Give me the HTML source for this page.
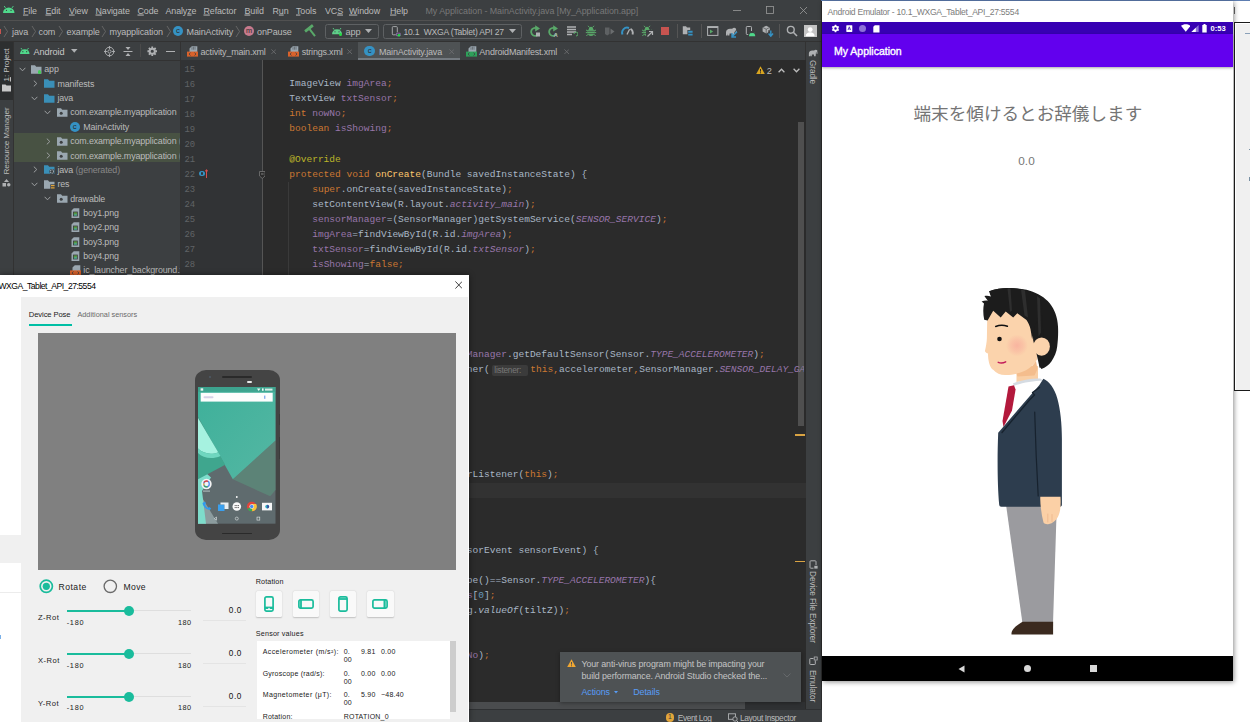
<!DOCTYPE html><html lang="ja"><head><meta charset="utf-8"><title>screenshot</title><style>
*{margin:0;padding:0;box-sizing:border-box}
html,body{width:1250px;height:722px;overflow:hidden;background:#fff}
body{position:relative;font-family:"Liberation Sans",sans-serif;font-size:8.7px;color:#bbb}
.a{position:absolute}
.t{position:absolute;white-space:pre;line-height:1;transform:translateY(-50%)}
.ui{font-family:"Liberation Sans",sans-serif;font-size:8.7px;color:#bbbbbb;letter-spacing:-0.12px}
.code{font-family:"Liberation Mono",monospace;font-size:9.558px;color:#a9b7c6}
.ln{font-family:"Liberation Mono",monospace;font-size:8.9px;color:#606366}
.k{color:#cc7832}.f{color:#9876aa}.an{color:#bbb529}.m{color:#ffc66d}.n{color:#6897bb}.i{font-style:italic}
.si{color:#9876aa;font-style:italic}
.dlg{font-family:"Liberation Sans",sans-serif;font-size:7.4px;color:#222;letter-spacing:0.15px}
u{text-decoration:underline;text-underline-offset:1px}
</style></head><body>
<div class="a" style="left:0px;top:0px;width:821.6px;height:722px;background:#3c3f41;"></div>
<div class="a" style="left:0px;top:20px;width:821.6px;height:1px;background:#515151;"></div>
<div class="a" style="left:0px;top:41px;width:821.6px;height:1px;background:#323232;"></div>
<div class="a" style="left:181px;top:60px;width:625px;height:650px;background:#2b2b2b;"></div>
<div class="a" style="left:181px;top:60px;width:82px;height:650px;background:#313335;"></div>
<div class="a" style="left:262px;top:60px;width:1px;height:650px;background:#555555;"></div>
<div class="a" style="left:0px;top:42px;width:13px;height:668px;background:#3c3f41;"></div>
<div class="a" style="left:13px;top:42px;width:1px;height:668px;background:#323232;"></div>
<div class="a" style="left:14px;top:42px;width:167px;height:668px;background:#3c3f41;"></div>
<div class="a" style="left:180px;top:42px;width:1px;height:668px;background:#323232;"></div>
<div class="a" style="left:14px;top:60px;width:167px;height:1px;background:#323232;"></div>
<div class="a" style="left:181px;top:42px;width:625px;height:18px;background:#3c3f41;"></div>
<div class="a" style="left:181px;top:60px;width:625px;height:1px;background:#323232;"></div>
<div class="a" style="left:805px;top:42px;width:1px;height:668px;background:#323232;"></div>
<div class="a" style="left:806px;top:42px;width:15.6px;height:668px;background:#3c3f41;"></div>
<div class="a" style="left:0px;top:709px;width:821.6px;height:13px;background:#3c3f41;"></div>
<div class="a" style="left:0px;top:709px;width:821.6px;height:1px;background:#323232;"></div>
<div class="a" style="left:820.6px;top:0px;width:1px;height:722px;background:#2b2b2b;"></div>
<div class="t ui" style="left:23px;top:11.4px;font-size:8.9px;color:#bbbbbb;letter-spacing:-0.1px"><u>F</u>ile</div>
<div class="t ui" style="left:45.5px;top:11.4px;font-size:8.9px;color:#bbbbbb;letter-spacing:-0.1px"><u>E</u>dit</div>
<div class="t ui" style="left:69px;top:11.4px;font-size:8.9px;color:#bbbbbb;letter-spacing:-0.1px"><u>V</u>iew</div>
<div class="t ui" style="left:95.5px;top:11.4px;font-size:8.9px;color:#bbbbbb;letter-spacing:-0.1px"><u>N</u>avigate</div>
<div class="t ui" style="left:137.5px;top:11.4px;font-size:8.9px;color:#bbbbbb;letter-spacing:-0.1px"><u>C</u>ode</div>
<div class="t ui" style="left:165.5px;top:11.4px;font-size:8.9px;color:#bbbbbb;letter-spacing:-0.1px">Analy<u>z</u>e</div>
<div class="t ui" style="left:203.5px;top:11.4px;font-size:8.9px;color:#bbbbbb;letter-spacing:-0.1px"><u>R</u>efactor</div>
<div class="t ui" style="left:244.5px;top:11.4px;font-size:8.9px;color:#bbbbbb;letter-spacing:-0.1px"><u>B</u>uild</div>
<div class="t ui" style="left:272.5px;top:11.4px;font-size:8.9px;color:#bbbbbb;letter-spacing:-0.1px">R<u>u</u>n</div>
<div class="t ui" style="left:296px;top:11.4px;font-size:8.9px;color:#bbbbbb;letter-spacing:-0.1px"><u>T</u>ools</div>
<div class="t ui" style="left:325px;top:11.4px;font-size:8.9px;color:#bbbbbb;letter-spacing:-0.1px">VC<u>S</u></div>
<div class="t ui" style="left:349px;top:11.4px;font-size:8.9px;color:#bbbbbb;letter-spacing:-0.1px"><u>W</u>indow</div>
<div class="t ui" style="left:390px;top:11.4px;font-size:8.9px;color:#bbbbbb;letter-spacing:-0.1px"><u>H</u>elp</div>
<div class="t ui" style="left:425.5px;top:10.6px;font-size:8.9px;color:#787878;letter-spacing:-0.05px">My Application - MainActivity.java [My_Application.app]</div>
<svg class="a" style="left:720px;top:0" width="100" height="21" viewBox="0 0 100 21"><g stroke="#9a9a9a" stroke-width="0.8" fill="none"><path d="M13 10.5h8"/><rect x="46.5" y="6.5" width="7" height="7"/><path d="M80 7l7 7M87 7l-7 7"/></g></svg>
<div class="t ui" style="left:12px;top:31.5px;font-size:9px">java</div>
<div class="t ui" style="left:38.5px;top:31.5px;font-size:9px">com</div>
<div class="t ui" style="left:66.5px;top:31.5px;font-size:9px">example</div>
<div class="t ui" style="left:109.5px;top:31.5px;font-size:9px">myapplication</div>
<svg class="a" style="left:3px;top:25px" width="6" height="13" viewBox="0 0 6 13"><path d="M1 1l3.5 5.5L1 12" stroke="#6e6e6e" stroke-width="0.8" fill="none"/></svg>
<svg class="a" style="left:30.5px;top:25px" width="6" height="13" viewBox="0 0 6 13"><path d="M1 1l3.5 5.5L1 12" stroke="#6e6e6e" stroke-width="0.8" fill="none"/></svg>
<svg class="a" style="left:58px;top:25px" width="6" height="13" viewBox="0 0 6 13"><path d="M1 1l3.5 5.5L1 12" stroke="#6e6e6e" stroke-width="0.8" fill="none"/></svg>
<svg class="a" style="left:101px;top:25px" width="6" height="13" viewBox="0 0 6 13"><path d="M1 1l3.5 5.5L1 12" stroke="#6e6e6e" stroke-width="0.8" fill="none"/></svg>
<svg class="a" style="left:166px;top:25px" width="6" height="13" viewBox="0 0 6 13"><path d="M1 1l3.5 5.5L1 12" stroke="#6e6e6e" stroke-width="0.8" fill="none"/></svg>
<svg class="a" style="left:235px;top:25px" width="6" height="13" viewBox="0 0 6 13"><path d="M1 1l3.5 5.5L1 12" stroke="#6e6e6e" stroke-width="0.8" fill="none"/></svg>
<div class="a" style="left:173px;top:26px;width:10px;height:10px;border-radius:50%;background:#3592c4;color:#2b2b2b;font:7.8px 'Liberation Sans',sans-serif;text-align:center;line-height:10px">c</div>
<div class="t ui" style="left:186.5px;top:31.5px;font-size:9px">MainActivity</div>
<div class="a" style="left:244px;top:26px;width:10px;height:10px;border-radius:50%;background:#c77a8d;color:#2b2b2b;font:7.3px 'Liberation Sans',sans-serif;text-align:center;line-height:10px">m</div>
<div class="t ui" style="left:257px;top:31.5px;font-size:9px">onPause</div>
<div class="a" style="left:0px;top:29px;width:1px;height:5px;background:#c75450;"></div>
<svg class="a" style="left:3px;top:5.5px" width="11.5" height="8.1" viewBox="0 0 11.5 8.1"><path d="M0 7.13a5.75 5.75 0 0 1 11.5 0z" fill="#4fd88b"/><path d="M2.53 1.9964000000000002L1.1500000000000001 0M8.97 1.9964000000000002L10.35 0" stroke="#4fd88b" stroke-width="0.9"/><circle cx="3.4499999999999997" cy="4.4206" r="0.6" fill="#3c3f41"/><circle cx="8.049999999999999" cy="4.4206" r="0.6" fill="#3c3f41"/></svg>
<svg class="a" style="left:304px;top:24px" width="14" height="14" viewBox="0 0 14 14"><g transform="rotate(-38 7 7)"><rect x="2" y="2.2" width="10" height="3" rx="0.6" fill="#59a869"/><rect x="6" y="4" width="2" height="9.5" fill="#59a869"/></g></svg>
<div class="a" style="left:324.5px;top:23.5px;width:54px;height:15.5px;background:transparent;border:1px solid #5e6163;border-radius:2.5px"></div>
<svg class="a" style="left:332px;top:27.5px" width="10" height="7.2" viewBox="0 0 10 7.2"><path d="M0 6.2a5.0 5.0 0 0 1 10 0z" fill="#5fd08a"/><path d="M2.2 1.7360000000000002L1.0 0M7.800000000000001 1.7360000000000002L9.0 0" stroke="#5fd08a" stroke-width="0.9"/><circle cx="3.0" cy="3.844" r="0.6" fill="#3c3f41"/><circle cx="7.0" cy="3.844" r="0.6" fill="#3c3f41"/></svg>
<div class="a" style="left:338.5px;top:33px;width:3px;height:3px;background:#22dd44;border-radius:50%"></div>
<div class="t ui" style="left:345.5px;top:32.5px;font-size:9.2px">app</div>
<svg class="a" style="left:365px;top:29px" width="7" height="4" viewBox="0 0 7 4"><path d="M0 0h7L3.5 4z" fill="#afb1b3"/></svg>
<div class="a" style="left:382.5px;top:23.5px;width:139.5px;height:15.5px;background:transparent;border:1px solid #5e6163;border-radius:2.5px"></div>
<svg class="a" style="left:391px;top:25px" width="10" height="12" viewBox="0 0 10 12"><rect x="1.300" y="1.600" width="5" height="8.200" rx="0.9" fill="none" stroke="#afb1b3" stroke-width="0.9"/><rect x="4.800" y="7.300" width="5" height="4.500" fill="#3c3f41"/><path d="M5.600 8.200h3.600v2.600h-3.600z" fill="none" stroke="#a77bd1" stroke-width="0.700"/><circle cx="7.900" cy="10.300" r="1.300" fill="#22dd44"/></svg>
<div class="t ui" style="left:403.5px;top:31.5px;font-size:8.6px;letter-spacing:-0.22px">10.1  WXGA (Tablet) API 27</div>
<svg class="a" style="left:509px;top:29px" width="7" height="4" viewBox="0 0 7 4"><path d="M0 0h7L3.5 4z" fill="#afb1b3"/></svg>
<svg class="a" style="left:529px;top:25px" width="12" height="12" viewBox="0 0 12 12"><path d="M9.2 4.2A4 4 0 1 0 9.8 8.5" fill="none" stroke="#59a869" stroke-width="1.8"/><path d="M6.2 0.300L11 3.500 6.200 6.400z" fill="#59a869"/><rect x="7" y="7.5" width="4" height="4" fill="#afb1b3"/></svg>
<svg class="a" style="left:547px;top:25px" width="12" height="12" viewBox="0 0 12 12"><path d="M9.2 4.2A4 4 0 1 0 9.8 8.5" fill="none" stroke="#59a869" stroke-width="1.8"/><path d="M6.2 0.300L11 3.500 6.200 6.400z" fill="#59a869"/><text x="6.6" y="12" font-family="Liberation Sans" font-size="6" font-weight="bold" fill="#afb1b3">A</text></svg>
<svg class="a" style="left:566px;top:25px" width="12" height="12" viewBox="0 0 12 12"><path d="M1 2h9M1 4.5h9M1 7h9M1 9.5h5" stroke="#afb1b3" stroke-width="1.3"/><path d="M8 9a2 2 0 1 1 2 2" fill="none" stroke="#59a869" stroke-width="1"/></svg>
<svg class="a" style="left:584.5px;top:25px" width="12" height="12" viewBox="0 0 12 12"><ellipse cx="6" cy="7.3" rx="3.4" ry="3.7" fill="#59a869"/><path d="M3.8 3.9a2.2 2.2 0 0 1 4.4 0z" fill="#59a869"/><path d="M4.2 2.2L3 0.8M7.8 2.2L9 0.8M1 5l2 1M11 5L9 6M0.8 7.6h2M11.2 7.6h-2M1.3 10.6l2-1.2M10.700 10.600l-2-1.200" stroke="#59a869" stroke-width="1"/><path d="M3 6.300h6M3 8.600h6" stroke="#3c3f41" stroke-width="0.700"/></svg>
<svg class="a" style="left:603px;top:25px" width="12" height="12" viewBox="0 0 12 12"><path d="M2 2.5h4.5v6.5L4.2 10.5 2 9z" fill="#5e6163"/><path d="M7.5 3.5L11.5 6.5 7.5 9.5z" fill="#6a6d6f"/></svg>
<svg class="a" style="left:621px;top:25px" width="13" height="12" viewBox="0 0 13 12"><path d="M1.5 9.5A5 5 0 0 1 8 3" fill="none" stroke="#3592c4" stroke-width="2"/><path d="M9.5 3.8A5 5 0 0 1 11.5 9.5" fill="none" stroke="#afb1b3" stroke-width="1.9"/><path d="M6 9.5L8.6 4.2" stroke="#afb1b3" stroke-width="1.3"/></svg>
<svg class="a" style="left:640.5px;top:25px" width="12" height="12" viewBox="0 0 12 12"><ellipse cx="6" cy="7.3" rx="3.4" ry="3.7" fill="#59a869"/><path d="M3.8 3.9a2.2 2.2 0 0 1 4.4 0z" fill="#59a869"/><path d="M4.2 2.2L3 0.8M7.8 2.2L9 0.8M1 5l2 1M11 5L9 6M0.8 7.6h2M11.2 7.6h-2M1.3 10.6l2-1.2M10.700 10.600l-2-1.200" stroke="#59a869" stroke-width="1"/><path d="M3 6.300h6M3 8.600h6" stroke="#3c3f41" stroke-width="0.700"/></svg>
<svg class="a" style="left:646px;top:30px" width="8" height="8" viewBox="0 0 8 8"><rect x="0" y="0" width="8" height="8" fill="#3c3f41"/><path d="M1.5 6.5L6 2M3 1.5h3.5V5" fill="none" stroke="#afb1b3" stroke-width="1.2"/></svg>
<div class="a" style="left:661px;top:27px;width:7.5px;height:7.5px;background:#c75450;"></div>
<div class="a" style="left:676.5px;top:24px;width:1px;height:14px;background:#555555;"></div>
<svg class="a" style="left:682px;top:25px" width="12" height="12" viewBox="0 0 12 12"><path d="M0.8 1.300h3.200l1 1.300h3.200v6.600H0.800z" fill="#afb1b3"/><rect x="5.400" y="5" width="5.600" height="5.800" fill="#3c3f41"/><path d="M6.200 5.800h4.400v1.900H6.200zM6.200 8.700h4.400v1.900H6.200z" fill="#3592c4"/></svg>
<div class="a" style="left:700.5px;top:24px;width:1px;height:14px;background:#555555;"></div>
<svg class="a" style="left:706.5px;top:25px" width="12" height="12" viewBox="0 0 12 12"><rect x="0.6" y="1.6" width="10.3" height="8.8" fill="none" stroke="#afb1b3" stroke-width="1"/><path d="M0.6 2.3h10.3" stroke="#afb1b3" stroke-width="1.4"/><path d="M3 4.5L6.2 6.5 3 8.5z" fill="#59a869"/></svg>
<svg class="a" style="left:724.5px;top:26.5px" width="12.0" height="9.0" viewBox="0 0 12 9"><path d="M1 8.5V5.2C1 3 2.8 1.8 5 1.8h2.2C8 0.6 10 0.4 10.8 1.6c0.7 1 0.2 2.2-0.8 2.4l0.3 0.9c0.9-0.1 1.2-0.6 1.2-1.2h0.5c0.1 1.2-0.8 2.1-2 2L9.4 4.2 9 8.5H7.2L7 6.4H4.6L4.4 8.5H2.8L2.7 6.4 2.4 8.5z" fill="#afb1b3"/></svg>
<svg class="a" style="left:731px;top:31px" width="7" height="7" viewBox="0 0 7 7"><path d="M6 0.8L1.5 5.3M1 2v4h4" fill="none" stroke="#3592c4" stroke-width="1.4"/></svg>
<svg class="a" style="left:744.5px;top:25px" width="12" height="12" viewBox="0 0 12 12"><rect x="1.300" y="1.500" width="5.200" height="8" rx="0.8" fill="none" stroke="#afb1b3" stroke-width="1"/><rect x="3.200" y="6" width="8" height="6" fill="#3c3f41"/><path d="M4 11.200a3.100 3.100 0 0 1 6.200 0z" fill="#4fd88b"/><path d="M5 7.800l0.800 1M9.200 7.800l-0.800 1" stroke="#4fd88b" stroke-width="0.600"/></svg>
<svg class="a" style="left:762px;top:25px" width="12" height="12" viewBox="0 0 12 12"><path d="M4.200 0.800L7.800 2.400V6.600L4.200 8.400 0.600 6.600V2.400z" fill="#afb1b3"/><path d="M4.200 4.200v4.200M0.600 2.400L4.200 4.200l3.600-1.800" stroke="#3c3f41" stroke-width="0.600" fill="none"/><rect x="6.200" y="5.200" width="5.800" height="6.800" fill="#3c3f41" opacity="0.900"/><path d="M8.800 5.500V10.500M6.600 8.500L8.800 11.200 11 8.500" fill="none" stroke="#3592c4" stroke-width="1.400"/></svg>
<div class="a" style="left:779px;top:24px;width:1px;height:14px;background:#555555;"></div>
<svg class="a" style="left:785.5px;top:25px" width="12" height="12" viewBox="0 0 12 12"><circle cx="4.8" cy="4.8" r="3.4" fill="none" stroke="#afb1b3" stroke-width="1.4"/><path d="M7.3 7.3L11 11" stroke="#afb1b3" stroke-width="1.6"/></svg>
<div class="a" style="left:804px;top:25px;width:12.5px;height:12px;background:#c4c4c4;"></div>
<svg class="a" style="left:804px;top:25px" width="12.5" height="12" viewBox="0 0 12.5 12"><circle cx="6.2" cy="4.6" r="2.4" fill="#fff"/><path d="M1.8 11.2c0-3 2-4 4.4-4s4.4 1 4.4 4z" fill="#fff"/></svg>
<div class="a" style="left:0px;top:42px;width:13px;height:57.5px;background:#2d2f30;"></div>
<div class="a ui" style="left:6.5px;top:64.5px;width:0;height:0"><div style="position:absolute;white-space:pre;transform:translate(-50%,-50%) rotate(-90deg);font-size:8.1px;color:#c4c4c4;line-height:1"><u>1</u>: Project</div></div>
<svg class="a" style="left:2px;top:84px" width="9" height="8" viewBox="0 0 9 8"><path d="M0 0.5h3.5l1 1H9v6H0z" fill="#c8c8c8"/></svg>
<div class="a ui" style="left:6.5px;top:141px;width:0;height:0"><div style="position:absolute;white-space:pre;transform:translate(-50%,-50%) rotate(-90deg);font-size:8.1px;color:#bbbbbb;line-height:1">Resource Manager</div></div>
<svg class="a" style="left:2px;top:179px" width="9" height="8" viewBox="0 0 9 8"><path d="M4.5 0L7 3H2z" fill="#afb1b3"/><rect x="0.5" y="4" width="3.5" height="3.5" fill="#afb1b3"/><rect x="5" y="4" width="3.5" height="3.5" rx="1.7" fill="#afb1b3"/></svg>
<svg class="a" style="left:20px;top:48px" width="9.5" height="6.9" viewBox="0 0 9.5 6.9"><path d="M0 5.89a4.75 4.75 0 0 1 9.5 0z" fill="#4fd88b"/><path d="M2.09 1.6492L0.9500000000000001 0M7.41 1.6492L8.55 0" stroke="#4fd88b" stroke-width="0.9"/><circle cx="2.85" cy="3.6517999999999997" r="0.6" fill="#3c3f41"/><circle cx="6.6499999999999995" cy="3.6517999999999997" r="0.6" fill="#3c3f41"/></svg>
<div class="t ui" style="left:33.6px;top:53.2px;font-size:9.2px;color:#c8c8c8">Android</div>
<svg class="a" style="left:71px;top:49.3px" width="6.5" height="4" viewBox="0 0 6.5 4"><path d="M0 0h6.5L3.25 3.8z" fill="#afb1b3"/></svg>
<svg class="a" style="left:104px;top:45.5px" width="11" height="11" viewBox="0 0 11 11"><circle cx="5.5" cy="5.5" r="4.3" fill="none" stroke="#afb1b3" stroke-width="1"/><circle cx="5.5" cy="5.5" r="1.6" fill="none" stroke="#afb1b3" stroke-width="0.9"/><path d="M5.5 0v3.2M5.5 7.8V11M0 5.5h3.2M7.8 5.5H11" stroke="#afb1b3" stroke-width="0.9"/></svg>
<svg class="a" style="left:123px;top:45.5px" width="10" height="11" viewBox="0 0 10 11"><path d="M0.5 5.5h9" stroke="#afb1b3" stroke-width="1"/><path d="M5 4L2.5 1h5zM5 7l-2.5 3h5z" fill="#afb1b3"/></svg>
<div class="a" style="left:139.5px;top:44px;width:1px;height:13px;background:#4b4b4b;"></div>
<svg class="a" style="left:146.5px;top:46px" width="10.5" height="10.5" viewBox="0 0 10.5 10.5"><g transform="translate(5.25 5.25)"><circle r="2.6" fill="none" stroke="#afb1b3" stroke-width="2"/><g stroke="#afb1b3" stroke-width="1.8"><path d="M0 -3V-4.8M0 3V4.8M-3 0H-4.8M3 0H4.8M2.1 2.1L3.4 3.4M-2.1 2.1L-3.4 3.4M2.1 -2.1L3.4 -3.4M-2.1 -2.1L-3.4 -3.4"/></g></g></svg>
<div class="a" style="left:166px;top:50.5px;width:9px;height:1.2px;background:#afb1b3;"></div>
<div class="a" style="left:14px;top:133.3px;width:166px;height:28.7px;background:#485243;"></div>
<svg class="a" style="left:18.5px;top:66.9px" width="7" height="5" viewBox="0 0 7 5"><path d="M0.6 0.8L3.5 3.8 6.4 0.8" fill="none" stroke="#9da0a2" stroke-width="1"/></svg>
<svg class="a" style="left:31px;top:64.9px" width="11" height="9" viewBox="0 0 11 9"><path d="M0 0.3h4l1.2 1.4H10.5V8.7H0z" fill="#9aa7b0"/></svg>
<div class="a" style="left:38px;top:70.4px;width:3.4px;height:3.4px;background:#40d055;border-radius:50%"></div>
<div class="t ui" style="left:44.3px;top:69.4px;font-size:8.9px;letter-spacing:-0.13px">app</div>
<svg class="a" style="left:32.5px;top:80.25px" width="5" height="7" viewBox="0 0 5 7"><path d="M0.8 0.6L3.8 3.5 0.8 6.4" fill="none" stroke="#9da0a2" stroke-width="1"/></svg>
<svg class="a" style="left:44px;top:79.25px" width="11" height="9" viewBox="0 0 11 9"><path d="M0 0.3h4l1.2 1.4H10.5V8.7H0z" fill="#3a8fb7"/></svg>
<div class="t ui" style="left:57.4px;top:83.75px;font-size:8.9px;letter-spacing:-0.13px">manifests</div>
<svg class="a" style="left:31.0px;top:95.6px" width="7" height="5" viewBox="0 0 7 5"><path d="M0.6 0.8L3.5 3.8 6.4 0.8" fill="none" stroke="#9da0a2" stroke-width="1"/></svg>
<svg class="a" style="left:44px;top:93.6px" width="11" height="9" viewBox="0 0 11 9"><path d="M0 0.3h4l1.2 1.4H10.5V8.7H0z" fill="#3a8fb7"/></svg>
<div class="t ui" style="left:57.4px;top:98.1px;font-size:8.9px;letter-spacing:-0.13px">java</div>
<svg class="a" style="left:44.0px;top:109.95px" width="7" height="5" viewBox="0 0 7 5"><path d="M0.6 0.8L3.5 3.8 6.4 0.8" fill="none" stroke="#9da0a2" stroke-width="1"/></svg>
<svg class="a" style="left:56.8px;top:107.95px" width="11" height="9" viewBox="0 0 11 9"><path d="M0 0.3h4l1.2 1.4H10.5V8.7H0z" fill="#9aa7b0"/><circle cx="4.2" cy="5.3" r="1.5" fill="#3c3f41"/></svg>
<div class="t ui" style="left:70.2px;top:112.45px;font-size:8.9px;letter-spacing:-0.13px">com.example.myapplication</div>
<div class="a" style="left:69.5px;top:121.6px;width:10.4px;height:10.4px;border-radius:50%;background:#3592c4;color:#2b2b2b;font:7.8px 'Liberation Sans',sans-serif;text-align:center;line-height:10.4px">c</div>
<div class="t ui" style="left:83.3px;top:126.8px;font-size:8.9px;letter-spacing:-0.13px">MainActivity</div>
<svg class="a" style="left:45.5px;top:137.65px" width="5" height="7" viewBox="0 0 5 7"><path d="M0.8 0.6L3.8 3.5 0.8 6.4" fill="none" stroke="#9da0a2" stroke-width="1"/></svg>
<svg class="a" style="left:56.8px;top:136.65px" width="11" height="9" viewBox="0 0 11 9"><path d="M0 0.3h4l1.2 1.4H10.5V8.7H0z" fill="#9aa7b0"/><circle cx="4.2" cy="5.3" r="1.5" fill="#3c3f41"/></svg>
<div class="t ui" style="left:70.2px;top:141.15px;font-size:8.9px;letter-spacing:-0.13px">com.example.myapplication <span style="color:#888">(androidTest)</span></div>
<svg class="a" style="left:45.5px;top:152.0px" width="5" height="7" viewBox="0 0 5 7"><path d="M0.8 0.6L3.8 3.5 0.8 6.4" fill="none" stroke="#9da0a2" stroke-width="1"/></svg>
<svg class="a" style="left:56.8px;top:151.0px" width="11" height="9" viewBox="0 0 11 9"><path d="M0 0.3h4l1.2 1.4H10.5V8.7H0z" fill="#9aa7b0"/><circle cx="4.2" cy="5.3" r="1.5" fill="#3c3f41"/></svg>
<div class="t ui" style="left:70.2px;top:155.5px;font-size:8.9px;letter-spacing:-0.13px">com.example.myapplication <span style="color:#888">(test)</span></div>
<svg class="a" style="left:32.5px;top:166.35px" width="5" height="7" viewBox="0 0 5 7"><path d="M0.8 0.6L3.8 3.5 0.8 6.4" fill="none" stroke="#9da0a2" stroke-width="1"/></svg>
<svg class="a" style="left:44px;top:165.35px" width="11" height="9" viewBox="0 0 11 9"><path d="M0 0.3h4l1.2 1.4H10.5V8.7H0z" fill="#3a8fb7"/><circle cx="8" cy="6.5" r="2.6" fill="#3c3f41"/><circle cx="8" cy="6.5" r="1.6" fill="none" stroke="#9aa7b0" stroke-width="1.1" stroke-dasharray="1 0.6"/></svg>
<div class="t ui" style="left:57.4px;top:169.85px;font-size:8.9px;letter-spacing:-0.13px">java <span style="color:#888">(generated)</span></div>
<svg class="a" style="left:31.0px;top:181.7px" width="7" height="5" viewBox="0 0 7 5"><path d="M0.6 0.8L3.5 3.8 6.4 0.8" fill="none" stroke="#9da0a2" stroke-width="1"/></svg>
<svg class="a" style="left:44px;top:179.7px" width="11" height="9" viewBox="0 0 11 9"><path d="M0 0.3h4l1.2 1.4H10.5V8.7H0z" fill="#9aa7b0"/><rect x="6.3" y="4.3" width="4.7" height="4.7" fill="#3c3f41"/><path d="M7 5.6h3.6M7 7.8h3.6" stroke="#e2a53a" stroke-width="1.3"/></svg>
<div class="t ui" style="left:57.4px;top:184.2px;font-size:8.9px;letter-spacing:-0.13px">res</div>
<svg class="a" style="left:44.0px;top:196.05px" width="7" height="5" viewBox="0 0 7 5"><path d="M0.6 0.8L3.5 3.8 6.4 0.8" fill="none" stroke="#9da0a2" stroke-width="1"/></svg>
<svg class="a" style="left:56.8px;top:194.05px" width="11" height="9" viewBox="0 0 11 9"><path d="M0 0.3h4l1.2 1.4H10.5V8.7H0z" fill="#9aa7b0"/><circle cx="4.2" cy="5.3" r="1.5" fill="#3c3f41"/></svg>
<div class="t ui" style="left:70.2px;top:198.55px;font-size:8.9px;letter-spacing:-0.13px">drawable</div>
<svg class="a" style="left:71px;top:207.9px" width="9" height="10.5" viewBox="0 0 9 10.5"><path d="M0.5 2.5L2.8 0.3H8.3V10H0.5z" fill="#9aa7b0"/><rect x="2" y="3.6" width="4.8" height="4.8" fill="#3c3f41"/><rect x="2.8" y="4.4" width="3.2" height="3.2" fill="#62b543" opacity="0.75"/><path d="M2.8 7.6l1.2-1.6 0.8 0.8 0.6-0.6 0.6 1.4z" fill="#40b6e0" opacity="0.8"/></svg>
<div class="t ui" style="left:83.3px;top:212.9px;font-size:8.9px;letter-spacing:-0.13px">boy1.png</div>
<svg class="a" style="left:71px;top:222.25px" width="9" height="10.5" viewBox="0 0 9 10.5"><path d="M0.5 2.5L2.8 0.3H8.3V10H0.5z" fill="#9aa7b0"/><rect x="2" y="3.6" width="4.8" height="4.8" fill="#3c3f41"/><rect x="2.8" y="4.4" width="3.2" height="3.2" fill="#62b543" opacity="0.75"/><path d="M2.8 7.6l1.2-1.6 0.8 0.8 0.6-0.6 0.6 1.4z" fill="#40b6e0" opacity="0.8"/></svg>
<div class="t ui" style="left:83.3px;top:227.25px;font-size:8.9px;letter-spacing:-0.13px">boy2.png</div>
<svg class="a" style="left:71px;top:236.6px" width="9" height="10.5" viewBox="0 0 9 10.5"><path d="M0.5 2.5L2.8 0.3H8.3V10H0.5z" fill="#9aa7b0"/><rect x="2" y="3.6" width="4.8" height="4.8" fill="#3c3f41"/><rect x="2.8" y="4.4" width="3.2" height="3.2" fill="#62b543" opacity="0.75"/><path d="M2.8 7.6l1.2-1.6 0.8 0.8 0.6-0.6 0.6 1.4z" fill="#40b6e0" opacity="0.8"/></svg>
<div class="t ui" style="left:83.3px;top:241.6px;font-size:8.9px;letter-spacing:-0.13px">boy3.png</div>
<svg class="a" style="left:71px;top:250.95px" width="9" height="10.5" viewBox="0 0 9 10.5"><path d="M0.5 2.5L2.8 0.3H8.3V10H0.5z" fill="#9aa7b0"/><rect x="2" y="3.6" width="4.8" height="4.8" fill="#3c3f41"/><rect x="2.8" y="4.4" width="3.2" height="3.2" fill="#62b543" opacity="0.75"/><path d="M2.8 7.6l1.2-1.6 0.8 0.8 0.6-0.6 0.6 1.4z" fill="#40b6e0" opacity="0.8"/></svg>
<div class="t ui" style="left:83.3px;top:255.95px;font-size:8.9px;letter-spacing:-0.13px">boy4.png</div>
<svg class="a" style="left:70px;top:265.3px" width="11" height="10.5" viewBox="0 0 11 10.5"><path d="M2.5 2.5L4.8 0.3H10.3V6H2.5z" fill="#9aa7b0"/><rect x="0" y="5.4" width="11" height="5" fill="#d9622b"/><path d="M3.5 6.5L2 7.9l1.5 1.4M7.5 6.5L9 7.9 7.5 9.3" stroke="#3c3f41" stroke-width="0.8" fill="none"/></svg>
<div class="t ui" style="left:83.3px;top:270.3px;font-size:8.9px;letter-spacing:-0.13px">ic_launcher_background.x</div>
<div class="a" style="left:180px;top:60px;width:1px;height:650px;background:#323232;"></div>
<div class="a" style="left:358px;top:42px;width:102px;height:17px;background:#4e5254;"></div>
<div class="a" style="left:358px;top:58px;width:102px;height:2.2px;background:#747a80;"></div>
<svg class="a" style="left:187px;top:45.5px" width="11" height="11" viewBox="0 0 11 11"><path d="M2.5 2.5L4.8 0.3H10.3V6H2.5z" fill="#9aa7b0"/><path d="M5 1.2v2.5M6.5 0.8v2.9M8 0.8v2.9" stroke="#3c3f41" stroke-width="0.5"/><rect x="0" y="5.6" width="11" height="5" fill="#d9622b"/><path d="M3.5 6.7L2 8.1l1.5 1.4M7.5 6.7L9 8.1 7.5 9.5" stroke="#3c3f41" stroke-width="0.8" fill="none"/></svg>
<div class="t ui" style="left:200.5px;top:52.4px;font-size:9.0px;letter-spacing:-0.2px">activity_main.xml</div>
<svg class="a" style="left:271px;top:48.5px" width="5.4" height="5.4" viewBox="0 0 5.4 5.4"><path d="M0.4 0.4l4.6 4.6M5 0.4L0.4 5" stroke="#6e7072" stroke-width="0.8"/></svg>
<svg class="a" style="left:288px;top:45.5px" width="11" height="11" viewBox="0 0 11 11"><path d="M2.5 2.5L4.8 0.3H10.3V6H2.5z" fill="#9aa7b0"/><path d="M5 1.2v2.5M6.5 0.8v2.9M8 0.8v2.9" stroke="#3c3f41" stroke-width="0.5"/><rect x="0" y="5.6" width="11" height="5" fill="#d9622b"/><path d="M3.5 6.7L2 8.1l1.5 1.4M7.5 6.7L9 8.1 7.5 9.5" stroke="#3c3f41" stroke-width="0.8" fill="none"/></svg>
<div class="t ui" style="left:301.7px;top:52.4px;font-size:9.0px;letter-spacing:-0.2px">strings.xml</div>
<svg class="a" style="left:347px;top:48.5px" width="5.4" height="5.4" viewBox="0 0 5.4 5.4"><path d="M0.4 0.4l4.6 4.6M5 0.4L0.4 5" stroke="#6e7072" stroke-width="0.8"/></svg>
<div class="a" style="left:364.40000000000003px;top:45.8px;width:10.4px;height:10.4px;border-radius:50%;background:#3592c4;color:#2b2b2b;font:7.8px 'Liberation Sans',sans-serif;text-align:center;line-height:10.4px">c</div>
<div class="t ui" style="left:379px;top:52.4px;font-size:9.0px;letter-spacing:-0.2px">MainActivity.java</div>
<svg class="a" style="left:448.5px;top:48.5px" width="5.4" height="5.4" viewBox="0 0 5.4 5.4"><path d="M0.4 0.4l4.6 4.6M5 0.4L0.4 5" stroke="#6e7072" stroke-width="0.8"/></svg>
<svg class="a" style="left:465.5px;top:45.5px" width="11" height="11" viewBox="0 0 11 11"><path d="M2.5 2.5L4.8 0.3H10.3V6H2.5z" fill="#9aa7b0"/><path d="M5 1.2v2.5M6.5 0.8v2.9M8 0.8v2.9" stroke="#3c3f41" stroke-width="0.5"/><rect x="0" y="5.6" width="11" height="5" fill="#2ea05a"/><path d="M3.5 6.7L2 8.1l1.5 1.4M7.5 6.7L9 8.1 7.5 9.5" stroke="#3c3f41" stroke-width="0.8" fill="none"/></svg>
<div class="t ui" style="left:479.3px;top:52.4px;font-size:9.0px;letter-spacing:-0.2px">AndroidManifest.xml</div>
<svg class="a" style="left:564px;top:48.5px" width="5.4" height="5.4" viewBox="0 0 5.4 5.4"><path d="M0.4 0.4l4.6 4.6M5 0.4L0.4 5" stroke="#6e7072" stroke-width="0.8"/></svg>
<svg class="a" style="left:808px;top:49px" width="10.2" height="7.6" viewBox="0 0 12 9"><path d="M1 8.5V5.2C1 3 2.8 1.8 5 1.8h2.2C8 0.6 10 0.4 10.8 1.6c0.7 1 0.2 2.2-0.8 2.4l0.3 0.9c0.9-0.1 1.2-0.6 1.2-1.2h0.5c0.1 1.2-0.8 2.1-2 2L9.4 4.2 9 8.5H7.2L7 6.4H4.6L4.4 8.5H2.8L2.7 6.4 2.4 8.5z" fill="#afb1b3"/></svg>
<div class="a ui" style="left:812.5px;top:72px;width:0;height:0"><div style="position:absolute;white-space:pre;transform:translate(-50%,-50%) rotate(90deg);font-size:8.3px;color:#bbbbbb;line-height:1">Gradle</div></div>
<svg class="a" style="left:808.5px;top:560px" width="9" height="9" viewBox="0 0 9 9"><rect x="1" y="0.8" width="6" height="7.4" rx="0.8" fill="none" stroke="#afb1b3" stroke-width="1"/><rect x="4.5" y="5" width="4.5" height="4" fill="#3c3f41"/><rect x="5.3" y="5.8" width="3.3" height="2.8" fill="#afb1b3"/></svg>
<div class="a ui" style="left:812.5px;top:607px;width:0;height:0"><div style="position:absolute;white-space:pre;transform:translate(-50%,-50%) rotate(90deg);font-size:8.3px;color:#bbbbbb;line-height:1">Device File Explorer</div></div>
<svg class="a" style="left:808.5px;top:656px" width="9" height="9" viewBox="0 0 9 9"><rect x="0.8" y="2.5" width="5.5" height="6" rx="0.6" fill="none" stroke="#afb1b3" stroke-width="1"/><rect x="4.5" y="0.5" width="4" height="4" fill="#3c3f41"/><rect x="5.2" y="1" width="3" height="3" fill="none" stroke="#afb1b3" stroke-width="0.8"/></svg>
<div class="a ui" style="left:812.5px;top:686px;width:0;height:0"><div style="position:absolute;white-space:pre;transform:translate(-50%,-50%) rotate(90deg);font-size:8.3px;color:#bbbbbb;line-height:1">Emulator</div></div>
<div class="a" style="left:181px;top:60px;width:625px;height:650px;background:#2b2b2b;"></div>
<div class="a" style="left:181px;top:60px;width:81.5px;height:650px;background:#313335;"></div>
<div class="a" style="left:261.9px;top:60px;width:1px;height:650px;background:#555555;"></div>
<div class="a" style="left:263.5px;top:482.92px;width:542px;height:15px;background:#323232;"></div>
<div class="t ln" style="left:184.4px;top:69.6px">15</div>
<div class="t ln" style="left:184.4px;top:84.64px">16</div>
<div class="t ln" style="left:184.4px;top:99.67999999999999px">17</div>
<div class="t ln" style="left:184.4px;top:114.72px">18</div>
<div class="t ln" style="left:184.4px;top:129.76000000000002px">19</div>
<div class="t ln" style="left:184.4px;top:144.8px">20</div>
<div class="t ln" style="left:184.4px;top:159.84px">21</div>
<div class="t ln" style="left:184.4px;top:174.88000000000002px">22</div>
<div class="t ln" style="left:184.4px;top:189.92000000000002px">23</div>
<div class="t ln" style="left:184.4px;top:204.96px">24</div>
<div class="t ln" style="left:184.4px;top:220.0px">25</div>
<div class="t ln" style="left:184.4px;top:235.04000000000002px">26</div>
<div class="t ln" style="left:184.4px;top:250.08px">27</div>
<div class="t ln" style="left:184.4px;top:265.12px">28</div>
<div class="t ln" style="left:184.4px;top:280.16px">29</div>
<div class="t ln" style="left:184.4px;top:295.2px">30</div>
<div class="t ln" style="left:184.4px;top:310.24px">31</div>
<div class="t ln" style="left:184.4px;top:325.28000000000003px">32</div>
<div class="t ln" style="left:184.4px;top:340.32px">33</div>
<div class="t ln" style="left:184.4px;top:355.36px">34</div>
<div class="t ln" style="left:184.4px;top:370.40000000000003px">35</div>
<div class="t ln" style="left:184.4px;top:385.44px">36</div>
<div class="t ln" style="left:184.4px;top:400.48px">37</div>
<div class="t ln" style="left:184.4px;top:415.52000000000004px">38</div>
<div class="t ln" style="left:184.4px;top:430.56px">39</div>
<div class="t ln" style="left:184.4px;top:445.6px">40</div>
<div class="t ln" style="left:184.4px;top:460.64px">41</div>
<div class="t ln" style="left:184.4px;top:475.68px">42</div>
<div class="t ln" style="left:184.4px;top:490.72px">43</div>
<div class="t ln" style="left:184.4px;top:505.76px">44</div>
<div class="t ln" style="left:184.4px;top:520.8px">45</div>
<div class="t ln" style="left:184.4px;top:535.8399999999999px">46</div>
<div class="t ln" style="left:184.4px;top:550.88px">47</div>
<div class="t ln" style="left:184.4px;top:565.92px">48</div>
<div class="t ln" style="left:184.4px;top:580.9599999999999px">49</div>
<div class="t ln" style="left:184.4px;top:596.0px">50</div>
<div class="t ln" style="left:184.4px;top:611.04px">51</div>
<div class="t ln" style="left:184.4px;top:626.0799999999999px">52</div>
<div class="t ln" style="left:184.4px;top:641.12px">53</div>
<div class="t ln" style="left:184.4px;top:656.16px">54</div>
<div class="t ln" style="left:184.4px;top:671.1999999999999px">55</div>
<div class="t ln" style="left:184.4px;top:686.24px">56</div>
<div class="t ln" style="left:184.4px;top:701.28px">57</div>
<div class="t ln" style="left:184.4px;top:716.3199999999999px">58</div>
<div class="t code" style="left:289.24px;top:84.34px">ImageView <span class="f">imgArea</span><span class="k">;</span></div>
<div class="t code" style="left:289.24px;top:99.38px">TextView <span class="f">txtSensor</span><span class="k">;</span></div>
<div class="t code" style="left:289.24px;top:114.42px"><span class="k">int </span><span class="f">nowNo</span><span class="k">;</span></div>
<div class="t code" style="left:289.24px;top:129.46px"><span class="k">boolean </span><span class="f">isShowing</span><span class="k">;</span></div>
<div class="t code" style="left:289.24px;top:159.54px"><span class="an">@Override</span></div>
<div class="t code" style="left:289.24px;top:174.58px"><span class="k">protected void </span><span class="m">onCreate</span>(Bundle savedInstanceState) {</div>
<div class="t code" style="left:312.18px;top:189.62px"><span class="k">super</span>.onCreate(savedInstanceState)<span class="k">;</span></div>
<div class="t code" style="left:312.18px;top:204.66px">setContentView(R.layout.<span class="si">activity_main</span>)<span class="k">;</span></div>
<div class="t code" style="left:312.18px;top:219.7px"><span class="f">sensorManager</span>=(SensorManager)getSystemService(<span class="si">SENSOR_SERVICE</span>)<span class="k">;</span></div>
<div class="t code" style="left:312.18px;top:234.74px"><span class="f">imgArea</span>=findViewById(R.id.<span class="si">imgArea</span>)<span class="k">;</span></div>
<div class="t code" style="left:312.18px;top:249.78px"><span class="f">txtSensor</span>=findViewById(R.id.<span class="si">txtSensor</span>)<span class="k">;</span></div>
<div class="t code" style="left:312.18px;top:264.82px"><span class="f">isShowing</span>=<span class="k">false;</span></div>
<div class="t code" style="left:289.24px;top:279.86px">}</div>
<div class="t code" style="left:289.24px;top:309.94px"><span class="an">@Override</span></div>
<div class="t code" style="left:289.24px;top:324.98px"><span class="k">protected void </span><span class="m">onResume</span>() {</div>
<div class="t code" style="left:312.18px;top:340.02px"><span class="k">super</span>.onResume()<span class="k">;</span></div>
<div class="t code" style="left:312.18px;top:355.06px">Sensor accelerometer=<span class="f">sensorManager</span>.getDefaultSensor(Sensor.<span class="si">TYPE_ACCELEROMETER</span>)<span class="k">;</span></div>
<div class="t code" style="left:312.18px;top:370.1px"><span class="f">sensorManager</span>.registerListener(</div>
<div class="a" style="left:491.5px;top:364.5px;width:36.5px;height:11.2px;background:#3b3b3b;border-radius:2px"></div>
<div class="t ui" style="left:494.3px;top:370.3px;font-size:8.3px;color:#787878;letter-spacing:-0.25px">listener:</div>
<div class="t code" style="left:530.3px;top:370.1px;width:274px;overflow:hidden"><span class="k">this,</span>accelerometer<span class="k">,</span>SensorManager.<span class="si">SENSOR_DELAY_GAME</span>)<span class="k">;</span></div>
<div class="t code" style="left:289.24px;top:385.14px">}</div>
<div class="t code" style="left:289.24px;top:415.22px"><span class="an">@Override</span></div>
<div class="t code" style="left:289.24px;top:430.26px"><span class="k">protected void </span><span class="m">onPause</span>() {</div>
<div class="t code" style="left:312.18px;top:445.3px"><span class="k">super</span>.onPause()<span class="k">;</span></div>
<div class="t code" style="left:312.18px;top:460.34px"><span class="k">if</span>(<span class="f">isShowing</span>){</div>
<div class="t code" style="left:335.12px;top:475.38px"><span class="f">sensorManager</span>.unregisterListener(<span class="k">this</span>)<span class="k">;</span></div>
<div class="t code" style="left:312.18px;top:490.42px">}</div>
<div class="t code" style="left:289.24px;top:505.46px">}</div>
<div class="t code" style="left:289.24px;top:535.54px"><span class="an">@Override</span></div>
<div class="t code" style="left:289.24px;top:550.58px"><span class="k">public void </span><span class="m">onSensorChanged</span>(SensorEvent sensorEvent) {</div>
<div class="t code" style="left:312.18px;top:565.62px"><span class="k">float </span>tiltZ<span class="k">;</span></div>
<div class="t code" style="left:312.18px;top:580.66px"><span class="k">if</span>(sensorEvent.<span class="f">sensor</span>.getType()==Sensor.<span class="si">TYPE_ACCELEROMETER</span>){</div>
<div class="t code" style="left:335.12px;top:595.7px">tiltZ=sensorEvent.<span class="f">values</span>[<span class="n">0</span>]<span class="k">;</span></div>
<div class="t code" style="left:335.12px;top:610.74px"><span class="f">txtSensor</span>.setText(String.<span class="i">valueOf</span>(tiltZ))<span class="k">;</span></div>
<div class="t code" style="left:312.18px;top:625.78px">}</div>
<div class="t code" style="left:323.65px;top:655.86px"><span class="f">imgArea</span>.setImageLevel(<span class="f">nowNo</span>)<span class="k">;</span></div>
<div class="a" style="left:199.3px;top:170.88000000000002px;width:5.6px;height:5.6px;background:#3592c4;border-radius:50%"></div>
<div class="a" style="left:200.9px;top:172.48000000000002px;width:2.4px;height:2.4px;background:#313335;border-radius:50%"></div>
<svg class="a" style="left:204.8px;top:168.98000000000002px" width="3" height="9" viewBox="0 0 3 9"><path d="M1.500 9V1M0 2.600L1.500 0.600 3 2.600" stroke="#d64f4f" stroke-width="1" fill="none"/></svg>
<svg class="a" style="left:258.7px;top:170.78px" width="6.6" height="8" viewBox="0 0 6.6 8"><path d="M0.500 0.500h5.600v4.500L3.300 7.500 0.500 5z" fill="#2b2b2b" stroke="#777" stroke-width="0.8"/><path d="M2 3h2.600" stroke="#999" stroke-width="0.8"/></svg>
<div class="a" style="left:287.7px;top:182.12px;width:1px;height:94.24px;background:#3a3a3a;"></div>
<svg class="a" style="left:755.5px;top:65.5px" width="9" height="8.5" viewBox="0 0 9 8.5"><path d="M4.5 0.3L8.8 8H0.2z" fill="#d9a520"/><path d="M4.5 3v2.6M4.5 6.3v1" stroke="#2b2b2b" stroke-width="1"/></svg>
<div class="t ui" style="left:766.7px;top:71.8px;font-size:9.2px;color:#bbbbbb">2</div>
<svg class="a" style="left:778px;top:67.5px" width="7" height="5" viewBox="0 0 7 5"><path d="M0.6 4.2L3.5 1.2 6.4 4.2" fill="none" stroke="#bbbbbb" stroke-width="1.3"/></svg>
<svg class="a" style="left:793px;top:67.5px" width="7" height="5" viewBox="0 0 7 5"><path d="M0.6 0.8L3.5 3.8 6.4 0.8" fill="none" stroke="#bbbbbb" stroke-width="1.3"/></svg>
<div class="a" style="left:798px;top:122px;width:6.2px;height:303.5px;background:rgba(140,140,140,0.38);"></div>
<div class="a" style="left:795px;top:434.3px;width:10px;height:1.4px;background:#d9a343;"></div>
<div class="a" style="left:795px;top:561px;width:10px;height:1.4px;background:#d9a343;"></div>
<div class="a" style="left:181px;top:701.5px;width:624px;height:7.5px;background:#2f3133;"></div>
<div class="a" style="left:400px;top:702px;width:345px;height:6.5px;background:#4a4c4e;"></div>
<div class="a" style="left:559.5px;top:652.3px;width:241.5px;height:50.2px;background:#4e5254;box-shadow:0 1px 4px rgba(0,0,0,0.35)"></div>
<svg class="a" style="left:566.5px;top:659px" width="9" height="8.5" viewBox="0 0 9 8.5"><path d="M4.5 0.3L8.8 8H0.2z" fill="#f0a732"/><path d="M4.5 3v2.6M4.5 6.3v1" stroke="#4e5254" stroke-width="1"/></svg>
<div class="t ui" style="left:581.5px;top:664.2px;font-size:8.9px;letter-spacing:-0.12px;color:#c4c4c4">Your anti-virus program might be impacting your</div>
<div class="t ui" style="left:581.5px;top:675.7px;font-size:8.9px;letter-spacing:-0.12px;color:#c4c4c4">build performance. Android Studio checked the...</div>
<div class="t ui" style="left:581.5px;top:691.8px;font-size:8.9px;color:#589df6;letter-spacing:-0.1px">Actions</div>
<svg class="a" style="left:613.5px;top:690.5px" width="4" height="3" viewBox="0 0 4 3"><path d="M0 0h4L2 2.6z" fill="#589df6"/></svg>
<div class="t ui" style="left:633.3px;top:691.8px;font-size:8.9px;color:#589df6;letter-spacing:-0.1px">Details</div>
<svg class="a" style="left:783px;top:673px" width="8" height="5" viewBox="0 0 8 5"><path d="M0.5 0.6L4 4 7.5 0.6" fill="none" stroke="#6a6d6f" stroke-width="0.9"/></svg>
<div class="a" style="left:0px;top:709px;width:821.6px;height:13px;background:#3c3f41;"></div>
<div class="a" style="left:0px;top:709px;width:821.6px;height:1px;background:#2f3133;"></div>
<div class="a" style="left:665.5999999999999px;top:713.4px;width:8.4px;height:8.4px;border-radius:50%;background:#e2a53a;color:#3c3f41;font:6.8px 'Liberation Sans',sans-serif;text-align:center;line-height:8.4px">1</div>
<div class="t ui" style="left:677.8px;top:717.8px;font-size:8.4px;letter-spacing:-0.45px">Event Log</div>
<svg class="a" style="left:727.5px;top:712.5px" width="11" height="10" viewBox="0 0 11 10"><rect x="0.5" y="0.8" width="7" height="5.5" fill="none" stroke="#afb1b3" stroke-width="0.9"/><circle cx="7" cy="6" r="2.2" fill="#3c3f41" stroke="#afb1b3" stroke-width="0.9"/><path d="M8.6 7.6l1.8 1.8" stroke="#afb1b3" stroke-width="1"/></svg>
<div class="t ui" style="left:740px;top:717.8px;font-size:8.4px;letter-spacing:-0.38px">Layout Inspector</div>
<div class="a" style="left:0px;top:274.8px;width:469.3px;height:447.2px;background:#ffffff;box-shadow:0 0 6px rgba(0,0,0,0.45)"></div>
<div class="t ui" style="left:-1.5px;top:286.2px;font-size:8.6px;color:#000;letter-spacing:-0.5px">WXGA_Tablet_API_27:5554</div>
<svg class="a" style="left:454.7px;top:281px" width="7.6" height="8" viewBox="0 0 7.6 8"><path d="M0.4 0.4l6.8 7.2M7.2 0.4L0.4 7.6" stroke="#222" stroke-width="0.85"/></svg>
<div class="a" style="left:20.8px;top:297px;width:447.7px;height:425px;background:#f0f0f0;"></div>
<div class="a" style="left:0px;top:534.8px;width:20.8px;height:28.2px;background:#f0f0f0;"></div>
<div class="a" style="left:0px;top:592px;width:20.8px;height:1px;background:#ececec;"></div>
<div class="a" style="left:0px;top:635px;width:1px;height:4px;background:#7ab0e8;"></div>
<div class="t dlg" style="left:28.8px;top:314.8px;font-size:7.6px;color:#1a1a1a;letter-spacing:-0.09px">Device Pose</div>
<div class="t dlg" style="left:77.4px;top:314.8px;font-size:7.3px;color:#6a6a6a;letter-spacing:0.01px">Additional sensors</div>
<div class="a" style="left:28.8px;top:324.4px;width:43.2px;height:1.6px;background:#00bfa5;"></div>
<div class="a" style="left:38px;top:332.8px;width:418.3px;height:237px;background:#808080;"></div>
<div class="a" style="left:195px;top:370px;width:84.5px;height:170px;background:#444444;border-radius:11px/10px"></div>
<div class="a" style="left:279.3px;top:414px;width:1.2px;height:11px;background:#3a3a3a;"></div>
<div class="a" style="left:279.3px;top:437px;width:1.2px;height:22px;background:#3a3a3a;"></div>
<div class="a" style="left:221.7px;top:376.3px;width:30.3px;height:1.6px;background:#2a2a2a;border-radius:1px"></div>
<div class="a" style="left:221.7px;top:532.7px;width:30.3px;height:1.6px;background:#2a2a2a;border-radius:1px"></div>
<div class="a" style="left:246.6px;top:381px;width:5.4px;height:1.8px;background:#e8e8e8;border-radius:1px"></div>
<div class="a" style="left:209px;top:376px;width:2px;height:2px;background:#4e5a66;border-radius:50%"></div>
<svg class="a" style="left:198.2px;top:387px" width="77.5" height="136.7" viewBox="0 0 77.5 136.7">
<defs><linearGradient id="wg" x1="0" y1="0" x2="1" y2="1"><stop offset="0" stop-color="#3eb09a"/><stop offset="1" stop-color="#54b7a3"/></linearGradient></defs>
<rect width="77.5" height="136.7" fill="#5f6b6e"/>
<path d="M0 104L20 136.7H0z" fill="#8c9c9e"/>
<path d="M0 79L13 90.500 4 104 8 136.7H0z" fill="#7edccb"/>
<path d="M34.800 92.200L77.5 53.500V103L72.200 109.300z" fill="#5c8377"/>
<path d="M0 0H77.5V53.500L34.800 92.200 0 30.100z" fill="url(#wg)"/>
<path d="M0 30.100L27.200 77.800 0 92.200z" fill="#3fa68e"/>
<path d="M0 31L20.200 65.200C13 68.500 5 66.500 0 61.600z" fill="#a6f2e0"/>
<path d="M0 61.600C5 66.500 13 68.500 20.200 65.200L22.500 69C14 73 5 71 0 66z" fill="#6fd6bf"/>
<rect x="0" y="0" width="77.5" height="4.8" fill="#3a9a86" opacity="0.6"/>
<rect x="2.7" y="5.8" width="72" height="8.8" fill="#fdfdfd"/>
<rect x="5.5" y="9.2" width="10" height="2" fill="#d7d2e8" rx="1"/><rect x="66" y="8.6" width="1.4" height="3.2" fill="#8ab0ee"/>
<rect x="2.6" y="1.3" width="2.6" height="2.4" fill="#e8f4f0"/><rect x="64" y="1.4" width="1.6" height="2.4" fill="#f0f8f6"/><rect x="67" y="1.6" width="7.5" height="2" fill="#d6ebe6"/><path d="M59 1.4h3.4l-1.7 2.6z" fill="#eef8f5"/>
<circle cx="8.5" cy="97" r="5.2" fill="#f4f4f4"/><circle cx="8.5" cy="97" r="2.8" fill="none" stroke="#4d8cf0" stroke-width="1.3"/><path d="M6 95.5a2.8 2.8 0 0 1 4-1" stroke="#e8453c" stroke-width="1.3" fill="none"/><path d="M6.2 98.6a2.8 2.8 0 0 0 3.5 1" stroke="#3aa757" stroke-width="1.3" fill="none"/><path d="M5.8 96.4a2.8 2.8 0 0 0 0.3 2" stroke="#f9bb2d" stroke-width="1.3" fill="none"/>
<rect x="5" y="103.5" width="7" height="1.2" fill="#a8b4b6"/>
<circle cx="38.8" cy="110" r="0.9" fill="#fff"/>
<path d="M4.5 116c0.5 3.5 3.5 6.5 7.5 7l1.2-1.8-2.2-1.2-1 0.9c-1.4-0.8-2.4-2-3-3.4l1-0.9-1-2.2z" fill="#2f9bf0"/>
<rect x="20" y="117.5" width="6.5" height="6.5" fill="#3aa0ee"/><path d="M22.5 115.5h8v6.5h-4v-4.5h-4z" fill="#e8eef2"/>
<circle cx="38.8" cy="119.5" r="4.3" fill="#fafafa"/><path d="M36.6 118.6h4.4M36.6 120.6h4.4" stroke="#666" stroke-width="1" stroke-dasharray="1.2 0.4"/>
<circle cx="53.7" cy="119.5" r="4.8" fill="#e2453a"/><path d="M53.7 119.5L49.6 122a4.8 4.8 0 0 0 4.6 2.3z" fill="#3aa757"/><path d="M49.4 121.8a4.8 4.8 0 0 0 4.6 2.5l2.3-4z" fill="#3aa757"/><path d="M54.2 124.3a4.8 4.8 0 0 0 4-7.2h-4.5z" fill="#f9c33a"/><circle cx="53.7" cy="119.5" r="2.2" fill="#f4f4f4"/><circle cx="53.7" cy="119.5" r="1.7" fill="#4a8af4"/>
<rect x="64" y="115.8" width="10" height="7.6" fill="#f6f6f6"/><circle cx="69.2" cy="119.6" r="1.9" fill="#2ca7c0"/><path d="M69.2 117.7a1.9 1.9 0 0 1 0 3.8z" fill="#3a4a9a"/>
<path d="M18.5 130l-2.2 1.6 2.2 1.6z" fill="none" stroke="#e4eaea" stroke-width="0.6"/><circle cx="38.8" cy="131.6" r="1.5" fill="none" stroke="#e4eaea" stroke-width="0.6"/><rect x="59" y="130.1" width="2.8" height="3" fill="none" stroke="#e4eaea" stroke-width="0.6"/>
</svg>
<svg class="a" style="left:39px;top:579.2px" width="15" height="15" viewBox="0 0 15 15"><circle cx="7.3" cy="7.3" r="6.1" fill="none" stroke="#1abc9c" stroke-width="1.7"/><circle cx="7.3" cy="7.3" r="3.6" fill="#1abc9c"/></svg>
<div class="t dlg" style="left:58.5px;top:587px;font-size:8.6px;color:#1a1a1a;letter-spacing:0.5px">Rotate</div>
<svg class="a" style="left:103.2px;top:579.2px" width="15" height="15" viewBox="0 0 15 15"><circle cx="7.3" cy="7.3" r="6.2" fill="none" stroke="#6a6a6a" stroke-width="1.3"/></svg>
<div class="t dlg" style="left:123.6px;top:587px;font-size:8.6px;color:#1a1a1a;letter-spacing:0.3px">Move</div>
<div class="a" style="left:66.7px;top:610.3px;width:124.3px;height:1px;background:#dedede;"></div>
<div class="a" style="left:66.7px;top:609.8499999999999px;width:62px;height:1.9px;background:#1abc9c;"></div>
<div class="a" style="left:123.6px;top:605.5999999999999px;width:10.4px;height:10.4px;background:#1abc9c;border-radius:50%"></div>
<div class="t dlg" style="left:37.9px;top:617.5999999999999px;font-size:7.6px;color:#222;letter-spacing:0.5px">Z-Rot</div>
<div class="t dlg" style="left:66.7px;top:622.5px;font-size:7.3px;color:#222;letter-spacing:0.75px">-180</div>
<div class="t dlg" style="left:177.9px;top:622.5px;font-size:7.3px;color:#222;letter-spacing:0.5px">180</div>
<div class="t dlg" style="left:228.8px;top:611.0999999999999px;font-size:8.2px;color:#111;letter-spacing:0.6px">0.0</div>
<div class="a" style="left:202.7px;top:619.8px;width:43px;height:1px;background:#e4e4e4;"></div>
<div class="a" style="left:66.7px;top:653.3px;width:124.3px;height:1px;background:#dedede;"></div>
<div class="a" style="left:66.7px;top:652.8499999999999px;width:62px;height:1.9px;background:#1abc9c;"></div>
<div class="a" style="left:123.6px;top:648.5999999999999px;width:10.4px;height:10.4px;background:#1abc9c;border-radius:50%"></div>
<div class="t dlg" style="left:37.9px;top:660.5999999999999px;font-size:7.6px;color:#222;letter-spacing:0.5px">X-Rot</div>
<div class="t dlg" style="left:66.7px;top:665.5px;font-size:7.3px;color:#222;letter-spacing:0.75px">-180</div>
<div class="t dlg" style="left:177.9px;top:665.5px;font-size:7.3px;color:#222;letter-spacing:0.5px">180</div>
<div class="t dlg" style="left:228.8px;top:654.0999999999999px;font-size:8.2px;color:#111;letter-spacing:0.6px">0.0</div>
<div class="a" style="left:202.7px;top:662.8px;width:43px;height:1px;background:#e4e4e4;"></div>
<div class="a" style="left:66.7px;top:696.2px;width:124.3px;height:1px;background:#dedede;"></div>
<div class="a" style="left:66.7px;top:695.75px;width:62px;height:1.9px;background:#1abc9c;"></div>
<div class="a" style="left:123.6px;top:691.5px;width:10.4px;height:10.4px;background:#1abc9c;border-radius:50%"></div>
<div class="t dlg" style="left:37.9px;top:703.5px;font-size:7.6px;color:#222;letter-spacing:0.5px">Y-Rot</div>
<div class="t dlg" style="left:66.7px;top:708.4000000000001px;font-size:7.3px;color:#222;letter-spacing:0.75px">-180</div>
<div class="t dlg" style="left:177.9px;top:708.4000000000001px;font-size:7.3px;color:#222;letter-spacing:0.5px">180</div>
<div class="t dlg" style="left:228.8px;top:697.0px;font-size:8.2px;color:#111;letter-spacing:0.6px">0.0</div>
<div class="a" style="left:202.7px;top:705.7px;width:43px;height:1px;background:#e4e4e4;"></div>
<div class="t dlg" style="left:255.8px;top:582px;font-size:7.2px;color:#1a1a1a;letter-spacing:0.12px">Rotation</div>
<div class="a" style="left:255.8px;top:590.7px;width:26.5px;height:26.2px;background:#f9f9f9;border-radius:1.5px;box-shadow:0 0.5px 1.5px rgba(0,0,0,0.2)"></div>
<svg class="a" style="left:264.05px;top:595.8px" width="10" height="16" viewBox="0 0 10 16"><rect x="0.9" y="0.9" width="8.2" height="14.2" rx="1.6" fill="none" stroke="#1abc9c" stroke-width="1.7"/><path d="M1 11.8h8" stroke="#1abc9c" stroke-width="2.4"/><circle cx="5" cy="12.6" r="0.8" fill="#f9f9f9"/></svg>
<div class="a" style="left:292.7px;top:590.7px;width:26.5px;height:26.2px;background:#f9f9f9;border-radius:1.5px;box-shadow:0 0.5px 1.5px rgba(0,0,0,0.2)"></div>
<svg class="a" style="left:297.95px;top:598.8px" width="16" height="10" viewBox="0 0 16 10"><rect x="0.9" y="0.9" width="14.2" height="8.2" rx="1.6" fill="none" stroke="#1abc9c" stroke-width="1.7"/><path d="M3 1v8" stroke="#1abc9c" stroke-width="1.8"/></svg>
<div class="a" style="left:329.9px;top:590.7px;width:26.5px;height:26.2px;background:#f9f9f9;border-radius:1.5px;box-shadow:0 0.5px 1.5px rgba(0,0,0,0.2)"></div>
<svg class="a" style="left:338.15px;top:595.8px" width="10" height="16" viewBox="0 0 10 16"><rect x="0.9" y="0.9" width="8.2" height="14.2" rx="1.6" fill="none" stroke="#1abc9c" stroke-width="1.7"/><path d="M1 3h8" stroke="#1abc9c" stroke-width="1.8"/></svg>
<div class="a" style="left:367px;top:590.7px;width:26.5px;height:26.2px;background:#f9f9f9;border-radius:1.5px;box-shadow:0 0.5px 1.5px rgba(0,0,0,0.2)"></div>
<svg class="a" style="left:372.25px;top:598.8px" width="16" height="10" viewBox="0 0 16 10"><rect x="0.9" y="0.9" width="14.2" height="8.2" rx="1.6" fill="none" stroke="#1abc9c" stroke-width="1.7"/><path d="M12.6 1v8" stroke="#1abc9c" stroke-width="2.2"/></svg>
<div class="t dlg" style="left:255.8px;top:633.5px;font-size:7.2px;color:#1a1a1a;letter-spacing:0.18px">Sensor values</div>
<div class="a" style="left:256.5px;top:641.4px;width:199.3px;height:77.3px;background:#ffffff;"></div>
<div class="a" style="left:450.2px;top:641.4px;width:5.6px;height:77.3px;background:#f0f0f0;"></div>
<div class="a" style="left:450.2px;top:641.4px;width:5.6px;height:70.5px;background:#cdcdcd;"></div>
<div class="t dlg" style="left:262.7px;top:651.1px;font-size:7.0px;color:#1a1a1a;letter-spacing:0.22px;letter-spacing:0.42px">Accelerometer (m/s²):</div>
<div class="t dlg" style="left:343.7px;top:651.1px;font-size:7.0px;color:#1a1a1a;letter-spacing:0.22px">0.</div>
<div class="t dlg" style="left:343.7px;top:658.8000000000001px;font-size:7.0px;color:#1a1a1a;letter-spacing:0.22px">00</div>
<div class="t dlg" style="left:361px;top:651.1px;font-size:7.0px;color:#1a1a1a;letter-spacing:0.22px">9.81</div>
<div class="t dlg" style="left:381px;top:651.1px;font-size:7.0px;color:#1a1a1a;letter-spacing:0.22px">0.00</div>
<div class="t dlg" style="left:262.7px;top:672.8px;font-size:7.0px;color:#1a1a1a;letter-spacing:0.22px;letter-spacing:0.22px">Gyroscope (rad/s):</div>
<div class="t dlg" style="left:343.7px;top:672.8px;font-size:7.0px;color:#1a1a1a;letter-spacing:0.22px">0.</div>
<div class="t dlg" style="left:343.7px;top:680.5px;font-size:7.0px;color:#1a1a1a;letter-spacing:0.22px">00</div>
<div class="t dlg" style="left:361px;top:672.8px;font-size:7.0px;color:#1a1a1a;letter-spacing:0.22px">0.00</div>
<div class="t dlg" style="left:381px;top:672.8px;font-size:7.0px;color:#1a1a1a;letter-spacing:0.22px">0.00</div>
<div class="t dlg" style="left:262.7px;top:694.1px;font-size:7.0px;color:#1a1a1a;letter-spacing:0.22px;letter-spacing:0.4px">Magnetometer (μT):</div>
<div class="t dlg" style="left:343.7px;top:694.1px;font-size:7.0px;color:#1a1a1a;letter-spacing:0.22px">0.</div>
<div class="t dlg" style="left:343.7px;top:701.8000000000001px;font-size:7.0px;color:#1a1a1a;letter-spacing:0.22px">00</div>
<div class="t dlg" style="left:361px;top:694.1px;font-size:7.0px;color:#1a1a1a;letter-spacing:0.22px">5.90</div>
<div class="t dlg" style="left:381px;top:694.1px;font-size:7.0px;color:#1a1a1a;letter-spacing:0.22px">−48.40</div>
<div class="t dlg" style="left:262.7px;top:715.6px;font-size:7.0px;color:#1a1a1a;letter-spacing:0.22px">Rotation:</div>
<div class="t dlg" style="left:343.7px;top:715.6px;font-size:7.0px;color:#1a1a1a;letter-spacing:0.22px">ROTATION_0</div>
<div class="a" style="left:821px;top:0px;width:429px;height:1px;background:#5d7db1;"></div>
<div class="a" style="left:821.8px;top:1px;width:411.5px;height:679.8px;background:#ffffff;box-shadow:1px 1px 5px rgba(0,0,0,0.45)"></div>
<div class="t ui" style="left:827.6px;top:12.3px;font-size:8.6px;color:#7c7c7c;letter-spacing:-0.27px">Android Emulator - 10.1_WXGA_Tablet_API_27:5554</div>
<div class="a" style="left:821.8px;top:22px;width:411.5px;height:12.3px;background:#3700b3;"></div>
<div class="a" style="left:821.8px;top:34.3px;width:411.5px;height:32.8px;background:#6200ee;box-shadow:0 1px 2.5px rgba(0,0,0,0.35)"></div>
<div class="t ui" style="left:834px;top:51.2px;font-size:10.5px;font-weight:400;color:#fff;letter-spacing:0;-webkit-text-stroke:0.35px #fff">My Application</div>
<svg class="a" style="left:831px;top:24px" width="9" height="9" viewBox="0 0 9 9"><g transform="translate(4.5 4.5)"><circle r="2.1" fill="none" stroke="#fff" stroke-width="1.7"/><g stroke="#fff" stroke-width="1.5"><path d="M0 -2.4V-3.8M0 2.4V3.8M-2.1 -1.2L-3.3 -1.9M2.1 -1.2L3.3 -1.9M-2.1 1.2L-3.3 1.9M2.1 1.2L3.3 1.9"/></g></g></svg>
<svg class="a" style="left:845.5px;top:24.8px" width="7" height="7.6" viewBox="0 0 7 7.6"><rect x="0.3" y="0.3" width="6" height="6.6" rx="0.5" fill="#fff"/><path d="M2 5l1.3-3.2L4.6 5M2.5 4h1.6" stroke="#3700b3" stroke-width="0.7" fill="none"/></svg>
<div class="a" style="left:858.7px;top:24.7px;width:7.6px;height:7.6px;background:#8d70d8;border-radius:50%"></div>
<svg class="a" style="left:872.5px;top:24.5px" width="7" height="8" viewBox="0 0 7 8"><path d="M1.8 0.3H6.5V7.5H0.3V1.8z" fill="#fff"/></svg>
<svg class="a" style="left:1180.5px;top:24.3px" width="9.5" height="8" viewBox="0 0 9.5 8"><path d="M0 1.8C2.5 -0.4 7 -0.4 9.5 1.8L4.75 7.8z" fill="#fff"/></svg>
<svg class="a" style="left:1190.5px;top:24.6px" width="8" height="7.4" viewBox="0 0 8 7.4"><path d="M7.6 0V7.4H0z" fill="#8d70d8"/><path d="M4.8 2.7V7.4H0z" fill="#fff"/></svg>
<svg class="a" style="left:1202.3px;top:24px" width="5" height="8.6" viewBox="0 0 5 8.6"><path d="M1.5 0h2v0.9h1.2v7.5H0.3V0.9h1.2z" fill="#fff"/></svg>
<div class="t ui" style="left:1210.6px;top:28.7px;font-size:7.6px;font-weight:bold;color:#fff;letter-spacing:-0.05px">0:53</div>
<div class="t" style="left:913.5px;top:114.8px;font-family:'Liberation Sans','Noto Sans CJK JP',sans-serif;font-size:17.6px;color:#757575;letter-spacing:0">端末を傾けるとお辞儀します</div>
<div class="t ui" style="left:1018.3px;top:162.2px;font-size:11.8px;color:#777;letter-spacing:0">0.0</div>
<div class="a" style="left:821.8px;top:656px;width:411.5px;height:24.8px;background:#000;"></div>
<svg class="a" style="left:958px;top:665px" width="7" height="8" viewBox="0 0 7 8"><path d="M6.5 0.5v7L0.5 4z" fill="#d8d8d8"/></svg>
<div class="a" style="left:1024.2px;top:665.2px;width:7px;height:7px;background:#d8d8d8;border-radius:50%"></div>
<div class="a" style="left:1090.3px;top:665.3px;width:6.6px;height:6.6px;background:#d8d8d8;"></div>
<svg class="a" style="left:970px;top:280px" width="110" height="360" viewBox="970 280 110 360">
<path d="M1006.2 506L1022.5 623.5H1053L1056.8 506z" fill="#9b9b9f"/>
<path d="M1011.5 634.4c-0.5-5 5-9 11-12.6h30.6v12.6z" fill="#3b2a1f"/>
<path d="M1016.5 366h21.5v16h-21.5z" fill="#f9cfa5"/>
<path d="M1003 392l10-9.5 25-3.5 5 4-14 12-24 32z" fill="#ffffff"/>
<path d="M1012.8 383.5c8-3.5 20-5.5 27.5-5l3 2.2c-10 0-21 2-29 5z" fill="#d5dbe2"/>
<path d="M1008.5 386.5l5.5-1.2 1.6 4.2-3.6 21-8.5 16.5-1-6z" fill="#b3193c"/>
<path d="M1043.4 378.7c6 3 11 9 14 20 3 11 4.500 25 4.500 40v66c0 1.500-1 2-2.500 2h-58c-1.500 0-2-0.800-2.200-2-1.800-20-2-48-1-72l41-47.500z" fill="#2d3d4e"/>
<path d="M1039.500 387.500l-7 5 2 2.500-5 5-27.500 32.500" fill="none" stroke="#17222e" stroke-width="1.300" stroke-linecap="round" stroke-linejoin="round"/>
<path d="M1034.700 412c0.800 30 2 58 3.500 84" fill="none" stroke="#17222e" stroke-width="1.200" stroke-linecap="round"/>
<path d="M1040.300 496.800h20.200c0.500 8 0 15-2.500 20-2 4-5.500 6.500-9 7.300-2.500 0.500-4.500 0-5.500-1.500-1.200-4.500-2-9-2.500-13.500-0.500-4-0.900-8-0.700-12.300z" fill="#fbd0a6"/>
<path d="M1047.800 514v8M1052 514.500v7" stroke="#eeb58a" stroke-width="0.800" stroke-linecap="round"/>
<path d="M989 291.300C996 288.500 1003 287.800 1010 288c7.500 0.200 14 1 19.800 2.800 8 2.600 15 6.500 19.900 12.500 5 6.200 7.800 14 8.300 23.200 0.400 7-0.100 14-0.800 20-0.700 5.700-2.800 10.700-5.800 14.900-2.500 3.500-6 6.200-10 7.600l-2-3-2-48-40-12z" fill="#1c1c1c"/>
<path d="M987.400 312c-0.300 9-0.300 18-0.500 26-0.100 4-0.900 8.500-2 13.300 0.700 1.300 1.800 2 3.200 2.200-0.300 3 0.200 6.500 1 9.500 1 3.500 2.500 6.200 4.100 6.700 3 3.500 7 5.200 12 5.300 4 0.100 8-0.400 11.500-1.300 9-2.300 16-7 20.500-14.500l2-20-4-25-30-12z" fill="#fbd3ac"/>
<path d="M1016.500 373.500c9-1.800 15.500-6 19.500-12.500l1.500 8-3 6.500-17 1z" fill="#f4bd8d"/>
<defs><radialGradient id="bl"><stop offset="0" stop-color="#f7a097" stop-opacity="0.6"/><stop offset="0.55" stop-color="#f7a097" stop-opacity="0.32"/><stop offset="1" stop-color="#f7a097" stop-opacity="0"/></radialGradient></defs><circle cx="1017" cy="345.500" r="11" fill="url(#bl)"/>
<path d="M1026 316l5.500 13c1 3.500 1.600 7.500 1.700 11.500l3.500 14 3 13.500 4-2.500 0.500-18-2-32z" fill="#1c1c1c"/>
<ellipse cx="1041.600" cy="346.600" rx="8.300" ry="9.200" fill="#fbd3ac"/>
<path d="M981.600 301.600C983.600 300.700 985.800 300.400 987.900 300.700C986.500 299.200 985.300 297.700 984.400 296.100C986.700 295.600 988.900 295.800 990.900 296.500C990.100 294.800 989.600 293.100 989.400 291.300C995.400 288.800 1003.400 287.800 1010.400 288C1019.400 288.300 1027.400 290 1033.400 293.500C1038.400 296.500 1041.400 301.500 1042.400 307.500L1034.400 327.500C1033.900 331.500 1033.100 335.500 1032.100 339.500C1031.700 336 1031.200 332.700 1030.500 329.200C1029.800 325.800 1028.500 322.800 1026.500 319.900L1017.300 313.200L1013.200 317.400L1005.700 311.600L1000.700 317.400L993.200 310.700L987.600 320.500L984.200 319.800C983 314 983 308 984 303.500Z" fill="#1c1c1c"/>
<path d="M1007.500 288.500l3 0 1.500 22-2 1.500zM1021 289.500l4 1 3 27-3.500-2zM1037 296l3 2.500 1 34-2.500 4z" fill="#2e2e2e"/><circle cx="999.500" cy="339" r="2.300" fill="#111"/>
<path d="M995.700 326.500c3.500-1.500 8-1.600 11.700-0.300" fill="none" stroke="#111" stroke-width="1.500" stroke-linecap="round"/>
<path d="M998.200 362.300c2.500 1 5 0.800 7.500-0.500" fill="none" stroke="#c21b5a" stroke-width="1.400" stroke-linecap="round"/>
</svg>
<div class="a" style="left:1234.1px;top:22px;width:17px;height:369px;background:#f0f0f0;border:1px solid #1a1a1a;border-right:none;box-shadow:inset 1px 1px 0 #fff"></div>
<div class="a" style="left:1234.3px;top:7px;width:1.2px;height:6.5px;background:#555;"></div>
<div class="a" style="left:1245px;top:32.6px;width:5px;height:1.3px;background:#8aa0b8;"></div>
<div class="a" style="left:1248.5px;top:148.7px;width:1.5px;height:1.6px;background:#7890a4;"></div>
<div class="a" style="left:1248.5px;top:176.5px;width:1.5px;height:4px;background:#7890a4;"></div>
</body></html>
